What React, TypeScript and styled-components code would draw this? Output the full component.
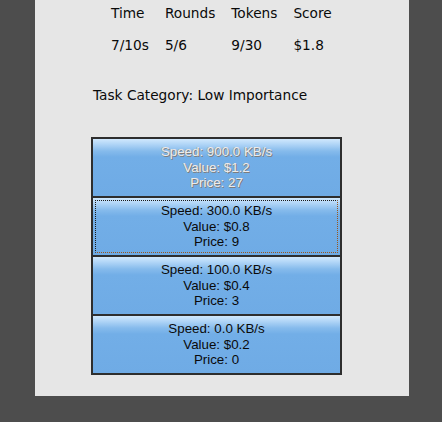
import React from "react";
import styled, { createGlobalStyle } from "styled-components";

const Global = createGlobalStyle`
  html, body { margin: 0; padding: 0; background: #4d4d4d; }
  * { box-sizing: border-box; }
`;

const Panel = styled.div`
  width: 374px;
  height: 396px;
  margin-left: 35px;
  background: #e6e6e6;
  padding: 5px 0 0 56px;
  font-family: "DejaVu Sans", Verdana, sans-serif;
  font-size: 13.7px;
  line-height: 16px;
  color: #0a0a0a;
`;

const Stats = styled.div`
  display: grid;
  grid-template-columns: repeat(4, auto);
  column-gap: 16px;
  row-gap: 16px;
  justify-content: start;
  margin-left: 20px;
`;

const Cell = styled.div`
  white-space: nowrap;
`;

const Category = styled.div`
  margin: 34px 0 0 2px;
`;

const List = styled.div`
  margin-top: 34px;
  width: 251px;
  border: 1px solid #2e2e2e;
  display: flex;
  flex-direction: column;
`;

const Option = styled.button<{ $focused?: boolean }>`
  position: relative;
  height: 59px;
  width: 100%;
  margin: 0;
  padding: 0;
  border: 1px solid #2e2e2e;
  background: linear-gradient(
    to bottom,
    #d0e8fd 0px,
    #b2d6f7 5px,
    #86bbec 12px,
    #72aee7 18px,
    #6fabe5 100%
  );
  font-family: "Liberation Sans", Arial, sans-serif;
  font-size: 13.333px;
  line-height: 15.6px;
  color: #0a0a0a;
  display: flex;
  flex-direction: column;
  align-items: center;
  justify-content: center;
  cursor: pointer;
  outline: none;

  &:disabled {
    color: #ececec;
    text-shadow: 1px 1px 0 #7d7d7d, -0.5px 0 0 #9a9a9a;
    cursor: default;
  }

  ${(p) =>
    p.$focused &&
    `
    &::after {
      content: "";
      position: absolute;
      inset: 2px;
      border: 1px dotted #1a1a1a;
      border-right-color: #9a561c;
      border-bottom-color: #9a561c;
      pointer-events: none;
    }
  `}
`;

const Line = styled.span`
  display: block;
  white-space: nowrap;
`;

const options = [
  { speed: "900.0", value: "1.2", price: 27, disabled: true },
  { speed: "300.0", value: "0.8", price: 9, focused: true },
  { speed: "100.0", value: "0.4", price: 3 },
  { speed: "0.0", value: "0.2", price: 0 },
];

export default function App() {
  return (
    <>
      <Global />
      <Panel>
        <Stats>
          <Cell>Time</Cell>
          <Cell>Rounds</Cell>
          <Cell>Tokens</Cell>
          <Cell>Score</Cell>
          <Cell>7/10s</Cell>
          <Cell>5/6</Cell>
          <Cell>9/30</Cell>
          <Cell>$1.8</Cell>
        </Stats>
        <Category>Task Category: Low Importance</Category>
        <List>
          {options.map((o) => (
            <Option key={o.speed} disabled={o.disabled} $focused={o.focused}>
              <Line>Speed: {o.speed} KB/s</Line>
              <Line>Value: ${o.value}</Line>
              <Line>Price: {o.price}</Line>
            </Option>
          ))}
        </List>
      </Panel>
    </>
  );
}
